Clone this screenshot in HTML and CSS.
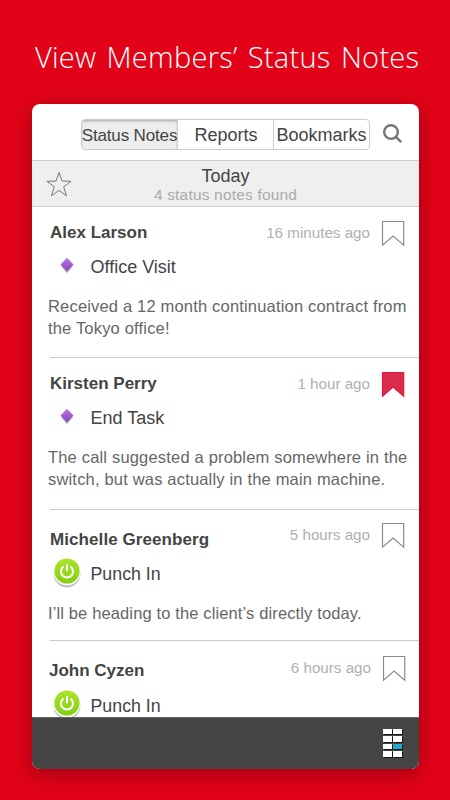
FILE: index.html
```html
<!DOCTYPE html>
<html lang="en">
<head>
<meta charset="utf-8">
<title>Status Notes</title>
<link rel="stylesheet" href="styles.css">
</head>
<body>
<svg class="defs" width="0" height="0" aria-hidden="true">
  <defs>
    <linearGradient id="purple" x1="0" y1="0" x2="0" y2="1"><stop offset="0" stop-color="#c078e4"/><stop offset="1" stop-color="#8540c4"/></linearGradient>
    <linearGradient id="green" x1="0" y1="0" x2="0" y2="1"><stop offset="0" stop-color="#abe52b"/><stop offset="1" stop-color="#83ce10"/></linearGradient>
    <symbol id="bookmark" viewBox="0 0 24 27"><path d="M1.500 1.500h21.200v23.700L12.100 16.100 1.500 25.200z"/></symbol>
    <symbol id="diamond" viewBox="0 0 30 34">
      <path d="M15 11l6.200 5.500-6.200 7-6.200-7z" fill="#999" opacity=".35"/>
      <path d="M15 11l5.400 5-5.400 6.800L9.600 16z" fill="#777" opacity=".6"/>
      <path d="M15 7.800l6.500 6.600L15 21l-6.500-6.600z" fill="url(#purple)"/>
    </symbol>
    <symbol id="power" viewBox="0 0 30 34">
      <circle cx="15" cy="17.200" r="13.600" fill="#bbb" opacity=".4"/>
      <circle cx="15" cy="16.600" r="13.300" fill="#999" opacity=".6"/>
      <circle cx="15" cy="15" r="13.500" fill="#fff"/>
      <circle cx="15" cy="14" r="12.600" fill="url(#green)"/>
      <path d="M11.500 9.600a6 6 0 1 0 7 0M15 7.200v7" fill="none" stroke="#fff" stroke-width="2"/>
    </symbol>
  </defs>
</svg>
<h1 class="title">View Members’ Status Notes</h1>
<main class="card">
  <nav class="toolbar">
    <div class="tabs">
      <span class="tab active">Status Notes</span>
      <span class="tab">Reports</span>
      <span class="tab">Bookmarks</span>
    </div>
    <svg class="search" width="20" height="20" viewBox="0 0 20 20"><circle cx="8" cy="8" r="6.8"/><path d="M12.800 12.800l5.400 5.400"/></svg>
  </nav>
  <header class="summary">
    <svg class="star" width="26" height="26" viewBox="0 0 26 26"><path d="M13 1.400l3 8.700 9.100.2-7.400 5.500 2.800 9L13 19.400l-7.500 5.400 2.800-9L.9 10.300l9.100-.2z"/></svg>
    <div class="day">Today</div>
    <div class="count">4 status notes found</div>
  </header>
  <section class="list">
    <article class="note first">
      <div class="head"><h2>Alex Larson</h2><div class="side"><time>16 minutes ago</time><svg class="mark"><use href="#bookmark"/></svg></div></div>
      <div class="kind"><svg class="badge"><use href="#diamond"/></svg><span>Office Visit</span></div>
      <p>Received a 12 month continuation contract from<br>the Tokyo office!</p>
    </article>
    <article class="note second">
      <div class="head"><h2>Kirsten Perry</h2><div class="side"><time>1 hour ago</time><svg class="mark saved"><use href="#bookmark"/></svg></div></div>
      <div class="kind"><svg class="badge"><use href="#diamond"/></svg><span>End Task</span></div>
      <p>The call suggested a problem somewhere in the<br>switch, but was actually in the main machine.</p>
    </article>
    <article class="note third">
      <div class="head"><h2>Michelle Greenberg</h2><div class="side"><time>5 hours ago</time><svg class="mark"><use href="#bookmark"/></svg></div></div>
      <div class="kind"><svg class="badge"><use href="#power"/></svg><span>Punch In</span></div>
      <p>I’ll be heading to the client’s directly today.</p>
    </article>
    <article class="note fourth">
      <div class="head"><h2>John Cyzen</h2><div class="side"><time>6 hours ago</time><svg class="mark"><use href="#bookmark"/></svg></div></div>
      <div class="kind"><svg class="badge"><use href="#power"/></svg><span>Punch In</span></div>
    </article>
  </section>
  <footer class="bar">
    <div class="menu"><i></i><i></i><i></i><i></i><i></i><i class="on"></i><i></i><i></i></div>
  </footer>
</main>
</body>
</html>
```
FILE: styles.css
```css
* { box-sizing: border-box; }
body {
  margin: 0;
  width: 450px;
  height: 800px;
  overflow: hidden;
  background: #e30318;
  font-family: "Liberation Sans", Arial, sans-serif;
  color: #444;
}
.defs { position: absolute; }
svg { display: block; flex: none; }
.title {
  margin: 0;
  height: 104px;
  padding: 37px 0 0 35px;
  font: 300 29px/40px "Open Sans", sans-serif;
  letter-spacing: 0.27px;
  word-spacing: 2.5px;
  color: #fff;
  white-space: nowrap;
}
.card {
  width: 387px;
  height: 665px;
  margin-left: 32px;
  border-radius: 8px;
  overflow: hidden;
  background: #fff;
  box-shadow: 0 5px 20px 2px rgba(80, 0, 10, 0.4);
  display: flex;
  flex-direction: column;
}
.toolbar {
  flex: none;
  display: flex;
  height: 56px;
  padding: 15px 0 0 49px;
}
.tabs {
  display: grid;
  grid-template-columns: 96px 96px 95px;
  width: 289px;
  height: 31px;
  border: 1px solid #ccc;
  border-radius: 4px;
  overflow: hidden;
}
.tab {
  display: flex;
  justify-content: center;
  min-width: 0;
  font-size: 18px;
  line-height: 31px;
  white-space: nowrap;
}
.tab + .tab { border-left: 1px solid #ccc; margin-left: -1px; }
.tab.active {
  font-size: 17px;
  letter-spacing: -0.15px;
  margin-left: -1px;
  background: #ededed;
  box-shadow: inset 0 1px 3px rgba(0, 0, 0, 0.3);
}
.search { margin: 5px 0 0 13px; fill: none; stroke: #777; stroke-width: 2.4; }
.summary {
  position: relative;
  flex: none;
  height: 47px;
  padding-top: 5px;
  border-top: 1px solid #ccc;
  border-bottom: 1px solid #ccc;
  background: #efefef;
  text-align: center;
}
.star { position: absolute; left: 14px; top: 10px; fill: none; stroke: #777; stroke-width: 1; }
.day { font-size: 18px; line-height: 20px; }
.count { font-size: 15.5px; line-height: 18px; letter-spacing: 0.18px; color: #aaa; }
.list { flex: none; height: 510px; overflow: hidden; }
.note { position: relative; padding-left: 16px; }
.first { height: 151px; padding-top: 14px; }
.second { height: 152px; padding-top: 14px; }
.third { height: 131px; padding-top: 18px; }
.fourth { padding-top: 19px; }
.note + .note::before {
  content: "";
  position: absolute;
  left: 18px;
  right: 0;
  top: -1px;
  height: 1px;
  background: #ccc;
}
.head { display: flex; justify-content: space-between; height: 22px; padding: 0 14.5px 0 2px; }
h2 { margin: 0; font-size: 17px; line-height: 24px; white-space: nowrap; }
.third h2 { letter-spacing: 0.08px; }
.fourth h2 { margin: -1px 0 0 -1px; }
.side { display: flex; gap: 10.5px; margin-top: -1px; }
.third .side { margin-top: -6px; }
.fourth .side { margin: -5px -1px 0 0; }
time { font-size: 15.2px; line-height: 25px; color: #b0b0b0; white-space: nowrap; }
.mark { width: 24px; height: 27px; fill: none; stroke: #8c8c8c; stroke-width: 1.2; }
.mark.saved { fill: #d92b4b; stroke: #e0183a; }
.kind {
  display: flex;
  align-items: center;
  gap: 8.5px;
  height: 24px;
  margin-top: 12px;
  padding-left: 4px;
  font-size: 18px;
  line-height: 24px;
}
.kind svg { width: 30px; height: 34px; }
.third .kind, .fourth .kind { font-size: 17.8px; }
p {
  margin: 17px 0 0;
  font-size: 16.5px;
  line-height: 21.5px;
  letter-spacing: 0.18px;
  color: #666;
  white-space: nowrap;
}
.third p { letter-spacing: 0.13px; }
.bar {
  flex: none;
  height: 52px;
  padding: 11px 0 0 351px;
  background: #454545;
  border-top: 1px solid #666;
}
.menu {
  display: grid;
  grid-template-columns: 9px 9px;
  gap: 2px 1px;
  width: 19px;
}
.menu i { height: 5.4px; background: #fff; box-shadow: 1px 1px 0 #151515; }
.menu .on { background: #25a9cf; }
```
